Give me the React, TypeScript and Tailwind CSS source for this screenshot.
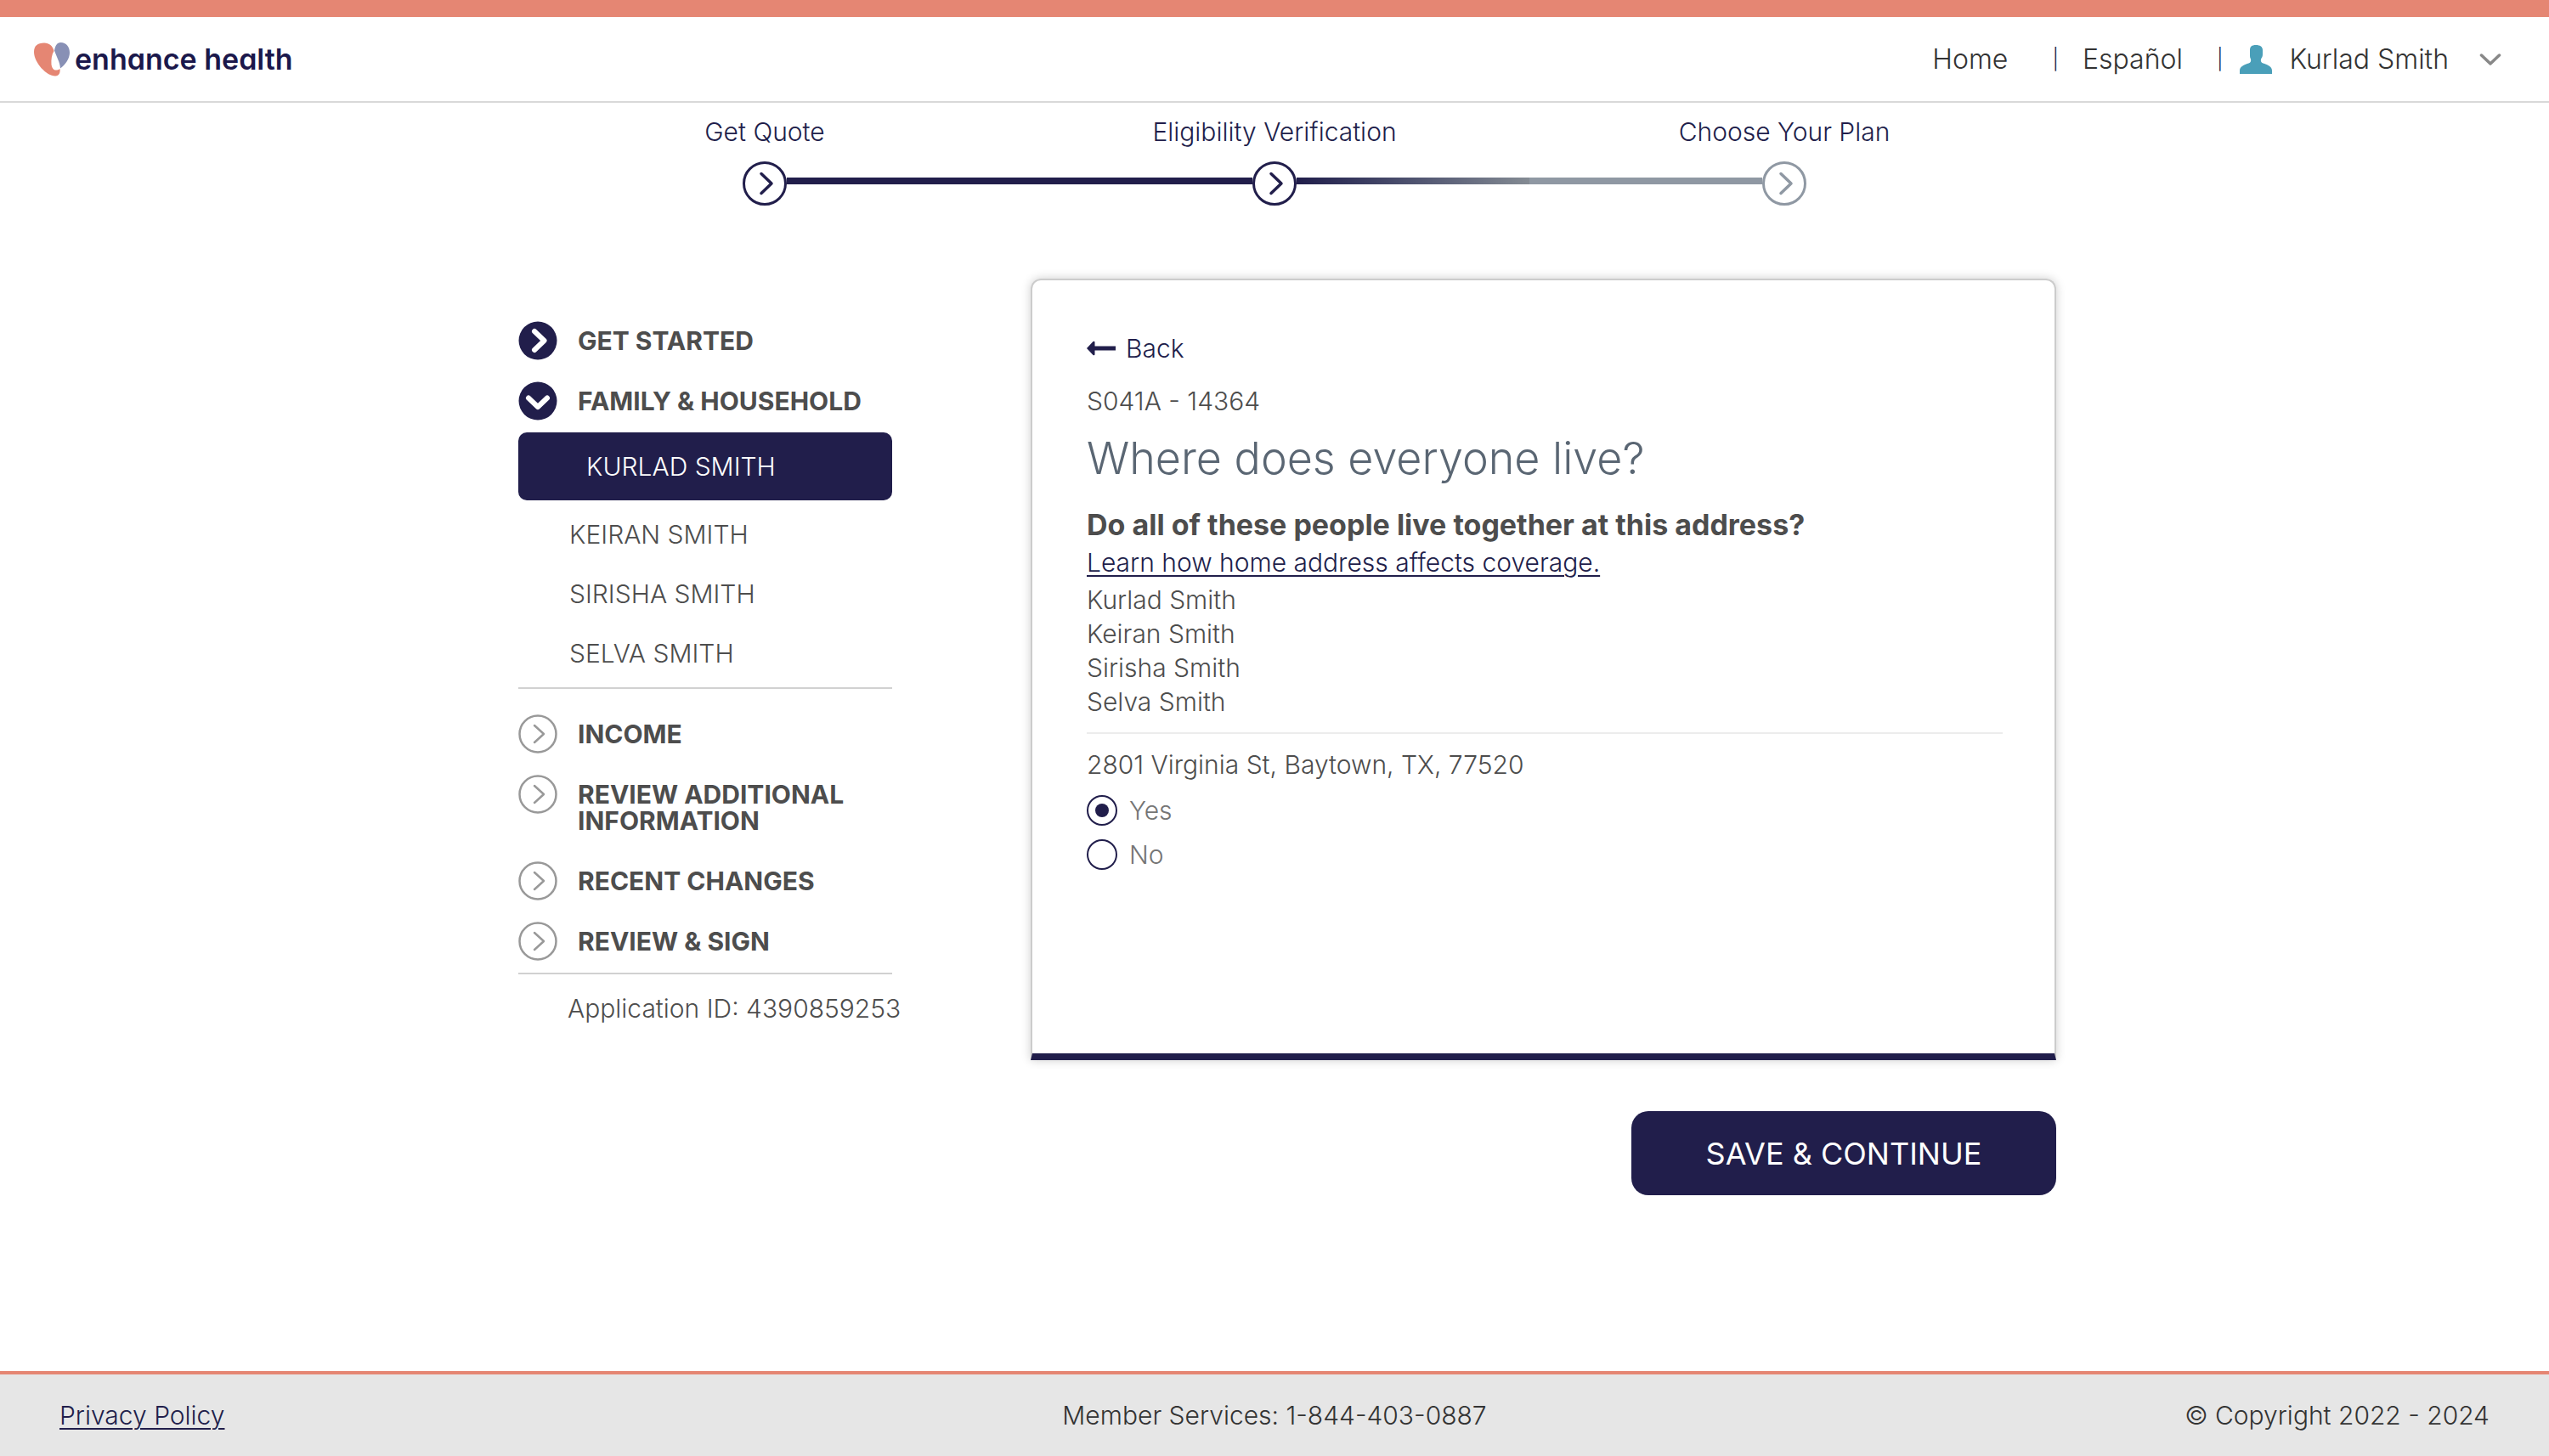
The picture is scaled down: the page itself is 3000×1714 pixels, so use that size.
import { useState } from "react";

const people = ["Kurlad Smith", "Keiran Smith", "Sirisha Smith", "Selva Smith"];

const steps = [
  { label: "Get Quote", color: "text-[#211e4b]" },
  { label: "Eligibility Verification", color: "text-[#211e4b]" },
  { label: "Choose Your Plan", color: "text-[#8f98a3]" },
];

function Heart() {
  return (
    <svg viewBox="0 0 42 40" className="h-10 w-[42px]" aria-hidden="true">
      <path
        fill="#e58673"
        d="M0 11C0 4 4 0.500 12 0.500C18 0.500 22 4 23.500 10C21 14 20 20 20.500 26C21.500 33 26 34 30.500 31C31 35 30 39.500 25 39.500C15 39.500 0 24 0 11Z"
      />
      <path fill="#8890b5" d="M24 9.500C25 4 27 0 31.500 0C38 0 42 5 42 12C42 19 37 26 31 30.500C30.500 23 27 18 24 9.500Z" />
    </svg>
  );
}

function UserIcon() {
  return (
    <svg viewBox="0 0 38 34" className="h-[34px] w-[38px]" fill="#4a9fb9" aria-hidden="true">
      <path d="M19 0C24 0 27 2 27 6V11C27 13.500 26 15 25 16.500C24.500 19 25 20.500 27.500 21.500C32 23 38 25 38 30V34H0V30C0 25 6 23 10.500 21.500C13 20.500 13.500 19 13 16.500C12 15 12 13.500 12 11V6C12 2 14 0 19 0Z" />
    </svg>
  );
}

function StepCircle({ color }: { color: string }) {
  return (
    <svg viewBox="0 0 52 52" fill="none" stroke="currentColor" strokeWidth="3" className={`size-[52px] shrink-0 ${color}`} aria-hidden="true">
      <circle cx="26" cy="26" r="24.500" />
      <path d="M22 14.500L34 26L22 37.500" strokeWidth="3.500" strokeLinecap="round" strokeLinejoin="round" />
    </svg>
  );
}

function NavIcon({ kind }: { kind: "done" | "open" | "todo" }) {
  if (kind === "todo") {
    return (
      <svg viewBox="0 0 46 46" fill="none" stroke="#999" strokeWidth="2.500" className="size-[46px] shrink-0" aria-hidden="true">
        <circle cx="23" cy="23" r="21.500" />
        <path d="M19 13L30 23L19 33" strokeLinecap="round" strokeLinejoin="round" />
      </svg>
    );
  }
  return (
    <svg viewBox="0 0 46 46" fill="none" className="size-[46px] shrink-0" aria-hidden="true">
      <circle cx="23" cy="23" r="22.500" fill="#211e4b" />
      <path
        d={kind === "done" ? "M19 12L30.500 23L19 34" : "M12 19.500L23 30L34 19.500"}
        stroke="#fff"
        strokeWidth="6"
        strokeLinecap="round"
        strokeLinejoin="round"
      />
    </svg>
  );
}

function NavRow({ kind, children }: { kind: "done" | "open" | "todo"; children: string }) {
  return (
    <button type="button" className="flex w-full items-start gap-6 text-left font-bold text-[#4d4d4d] uppercase">
      <NavIcon kind={kind} />
      <span className="pt-2 pb-[7px] leading-[31px]">{children}</span>
    </button>
  );
}

export default function App() {
  const [answer, setAnswer] = useState("Yes");

  return (
    <div className="flex min-h-screen flex-col border-t-[20px] border-[#e58673] bg-white font-[Inter,sans-serif] text-[30px] leading-10 font-light text-[#4d4d4d]">
      <header className="flex h-[101px] shrink-0 items-center justify-between border-b-2 border-[#d9d9d9] pr-14 pl-10">
        <a href="#home" className="flex items-center gap-1.5">
          <Heart />
          <span className="text-[34px] font-semibold text-[#1b184b] [font-feature-settings:'cv11']">enhance health</span>
        </a>
        <nav className="flex items-center text-[32px] text-[#333]">
          <a href="#home">Home</a>
          <span className="mr-7 ml-[52px] text-2xl text-[#211e4b]">|</span>
          <a href="#es">Español</a>
          <span className="mr-5 ml-10 text-2xl text-[#211e4b]">|</span>
          <button type="button" className="flex items-center">
            <UserIcon />
            <span className="mr-9 ml-5">Kurlad Smith</span>
            <svg viewBox="0 0 26 14" className="h-[14px] w-[26px]" fill="none" stroke="#888" strokeWidth="3.500" aria-hidden="true">
              <path d="M2.500 2L13 12L23.500 2" strokeLinecap="round" strokeLinejoin="round" />
            </svg>
          </button>
        </nav>
      </header>

      <ol className="mx-auto grid w-3/5 max-w-[1800px] grid-cols-3 pt-3.5 text-[#211e4b]">
        {steps.map((s, i) => (
          <li key={s.label} className="flex flex-col items-center">
            <span>{s.label}</span>
            <div className="mt-[15px] flex w-full items-center">
              <span className={i === 0 ? "h-2 flex-1" : i === 1 ? "mb-1.5 h-2 flex-1 bg-[#211e4b]" : "mb-1.5 h-2 flex-1 bg-[#8f98a3]"} />
              <StepCircle color={s.color} />
              <span
                className={
                  i === 0
                    ? "mb-1.5 h-2 flex-1 bg-[#211e4b]"
                    : i === 1
                      ? "mb-1.5 h-2 flex-1 bg-linear-to-r from-[#211e4b] to-[#848b93]"
                      : "h-2 flex-1"
                }
              />
            </div>
          </li>
        ))}
      </ol>

      <main className="mx-auto mt-[86px] flex w-full max-w-[1840px] items-start gap-[163px] pl-[30px]">
        <aside className="w-[440px] shrink-0 pt-[50px]">
          <div className="flex flex-col gap-[25px] pb-3.5">
            <NavRow kind="done">Get Started</NavRow>
            <NavRow kind="open">Family & Household</NavRow>
          </div>
          <ul className="border-b-2 border-[#d1d1d1] pb-[5px] leading-[70px] uppercase">
            {people.map((p, i) => (
              <li key={p}>
                <a
                  href="#member"
                  className={i === 0 ? "mb-[5px] block rounded-[10px] bg-[#211e4b] pl-20 leading-[80px] text-white" : "block pl-[60px]"}
                >
                  {p}
                </a>
              </li>
            ))}
          </ul>
          <div className="flex flex-col gap-[25px] border-b-2 border-[#d1d1d1] pt-[30px] pb-3.5">
            <NavRow kind="todo">Income</NavRow>
            <NavRow kind="todo">Review Additional Information</NavRow>
            <NavRow kind="todo">Recent Changes</NavRow>
            <NavRow kind="todo">Review & Sign</NavRow>
          </div>
          <p className="pt-5 pl-[58px] whitespace-nowrap">Application ID: 4390859253</p>
        </aside>

        <form className="flex min-w-0 flex-1 flex-col items-end gap-[60px]" onSubmit={(e) => e.preventDefault()}>
          <section className="min-h-[920px] w-full rounded-t-xl border-2 border-b-8 border-[#ccc] border-b-[#211e4b] pt-[60px] pr-[61px] pl-16 shadow-[0_0_12px_rgba(0,0,0,0.2)]">
            <button type="button" className="flex items-center gap-3 text-[#211e4b]">
              <svg viewBox="0 0 34 18" className="h-[18px] w-[34px]" fill="#211e4b" aria-hidden="true">
                <path d="M0 9L7.500 1Q9.500 0 9.500 2V6.500H34V11.500H9.500V16Q9.500 18 7.500 17Z" />
              </svg>
              Back
            </button>
            <p className="mt-[22px]">S041A - 14364</p>
            <h1 className="mt-4 text-[52px] leading-[64px] text-[#5a6673]">Where does everyone live?</h1>
            <fieldset className="mt-[26px]">
              <legend className="text-[34px] font-bold">Do all of these people live together at this address?</legend>
              <a href="#coverage" className="mt-1 block w-fit text-[#211e4b] underline decoration-2 underline-offset-4">
                Learn how home address affects coverage.
              </a>
              <ul className="mt-1 border-b-2 border-[#ececec] pb-4">
                {people.map((p) => (
                  <li key={p}>{p}</li>
                ))}
              </ul>
              <p className="mt-4">2801 Virginia St, Baytown, TX, 77520</p>
              <div className="mt-4 flex flex-col items-start gap-4 leading-9 text-[#757575]">
                {["Yes", "No"].map((o) => (
                  <label key={o} className="flex items-center gap-3.5">
                    <input
                      type="radio"
                      name="together"
                      value={o}
                      checked={answer === o}
                      onChange={() => setAnswer(o)}
                      className="grid size-9 appearance-none place-items-center rounded-full border-2 border-[#211e4b] before:size-4 before:rounded-full checked:before:bg-[#211e4b]"
                    />
                    {o}
                  </label>
                ))}
              </div>
            </fieldset>
          </section>
          <button type="submit" className="h-[99px] w-[500px] rounded-[20px] bg-[#211e4b] text-[36px] font-normal text-white">
            SAVE &amp; CONTINUE
          </button>
        </form>
      </main>

      <footer className="mt-auto grid h-[100px] shrink-0 grid-cols-3 items-center border-t-4 border-[#e58673] bg-[#e6e6e6] px-[70px] text-[#333]">
        <a href="#privacy" className="justify-self-start text-[#211e4b] underline decoration-2 underline-offset-4">
          Privacy Policy
        </a>
        <span className="justify-self-center">Member Services: 1-844-403-0887</span>
        <span className="justify-self-end">© Copyright 2022 - 2024</span>
      </footer>
    </div>
  );
}
